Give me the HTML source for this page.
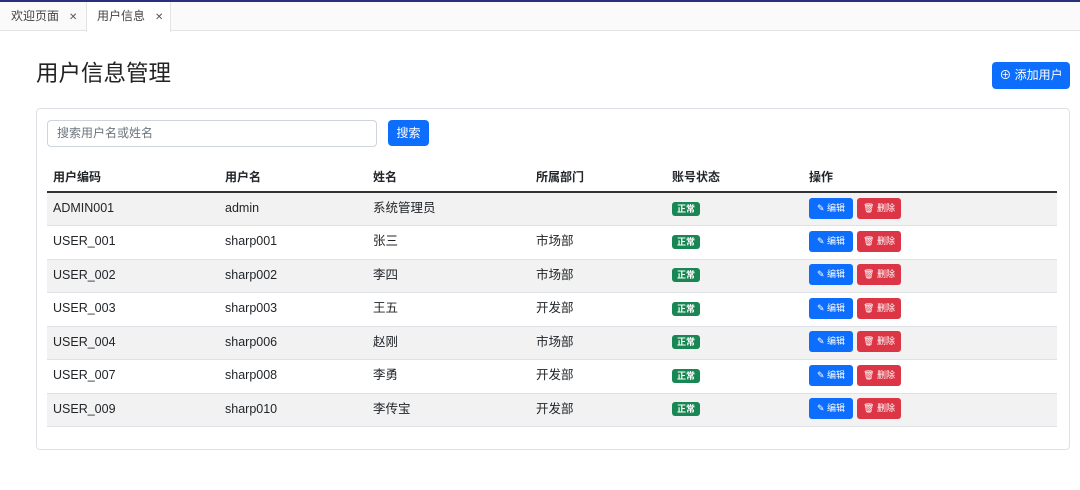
<!DOCTYPE html>
<html><head><meta charset="utf-8"><style>
*{box-sizing:border-box;margin:0;padding:0}
body{width:1080px;height:490px;background:#fff;font-family:"Liberation Sans","Noto Sans CJK SC",sans-serif;font-size:13px;color:#212529;position:relative;overflow:hidden}
.topline{position:absolute;left:0;top:0;width:1080px;height:2px;background:#2b2f7a}
.tabs{position:absolute;left:0;top:2px;width:1080px;height:29px;border-bottom:1px solid #e3e3e3;background:#fafafa}
.tab{position:absolute;top:0;height:29px;line-height:28px;font-size:12px;color:#444}
.tab .x{font-size:10px;margin-left:10px;color:#555}
.tab.act{background:#fff;border-left:1px solid #e3e3e3;border-right:1px solid #e3e3e3;height:30px}
h1{position:absolute;left:36px;top:59px;font-size:22.5px;line-height:30px;font-weight:400;color:#222}
.add{position:absolute;left:992px;top:62px;width:78px;height:27px;background:#0d6efd;border-radius:4px;color:#fff;font-size:12px;line-height:27px;text-align:center}
.card{position:absolute;left:36px;top:108px;width:1034px;height:342px;border:1px solid #dee2e6;border-radius:4px}
.inp{position:absolute;left:47px;top:120px;width:330px;height:27px;border:1px solid #ced4da;border-radius:4px;font-size:12px;color:#6c757d;line-height:25px;padding-left:9px}
.sb{position:absolute;left:388px;top:120px;width:41px;height:26px;background:#0d6efd;border-radius:4px;color:#fff;font-size:12px;line-height:26px;text-align:center}
table{position:absolute;left:47px;top:163px;width:1010px;border-collapse:collapse}
th{font-weight:700;text-align:left;height:29px;padding-left:6px;font-size:12px;border-bottom:2px solid #333;line-height:16px}
td{height:33.5px;padding:0 0 2px 6px;border-bottom:1px solid #dee2e6;line-height:16px;vertical-align:middle;font-size:12.5px}
td span{vertical-align:middle}
tr.s td{background:#f2f2f2}
.badge{display:inline-block;background:#198754;color:#fff;font-size:9px;font-weight:700;padding:0 5px;line-height:14px;border-radius:3px}
.b{display:inline-block;width:44px;height:21px;border-radius:3px;color:#fff;font-size:9px;line-height:21px;text-align:center}
.e{background:#0d6efd}.d{background:#dc3545;margin-left:4px}
</style></head><body>
<div class="topline"></div>
<div class="tabs">
<div class="tab" style="left:11px">欢迎页面<span class="x">✕</span></div>
<div class="tab act" style="left:86px;width:85px;padding-left:10px">用户信息<span class="x">✕</span></div>
</div>
<h1>用户信息管理</h1>
<div class="add">⊕ 添加用户</div>
<div class="card"></div>
<div class="inp">搜索用户名或姓名</div>
<div class="sb">搜索</div>
<table>
<tr><th style="width:172px">用户编码</th><th style="width:148px">用户名</th><th style="width:163px">姓名</th><th style="width:136px">所属部门</th><th style="width:137px">账号状态</th><th>操作</th></tr>
<tr class="s"><td>ADMIN001</td><td>admin</td><td>系统管理员</td><td></td><td><span class="badge">正常</span></td><td><span class="b e">✎ 编辑</span><span class="b d">🗑 删除</span></td></tr>
<tr><td>USER_001</td><td>sharp001</td><td>张三</td><td>市场部</td><td><span class="badge">正常</span></td><td><span class="b e">✎ 编辑</span><span class="b d">🗑 删除</span></td></tr>
<tr class="s"><td>USER_002</td><td>sharp002</td><td>李四</td><td>市场部</td><td><span class="badge">正常</span></td><td><span class="b e">✎ 编辑</span><span class="b d">🗑 删除</span></td></tr>
<tr><td>USER_003</td><td>sharp003</td><td>王五</td><td>开发部</td><td><span class="badge">正常</span></td><td><span class="b e">✎ 编辑</span><span class="b d">🗑 删除</span></td></tr>
<tr class="s"><td>USER_004</td><td>sharp006</td><td>赵刚</td><td>市场部</td><td><span class="badge">正常</span></td><td><span class="b e">✎ 编辑</span><span class="b d">🗑 删除</span></td></tr>
<tr><td>USER_007</td><td>sharp008</td><td>李勇</td><td>开发部</td><td><span class="badge">正常</span></td><td><span class="b e">✎ 编辑</span><span class="b d">🗑 删除</span></td></tr>
<tr class="s"><td>USER_009</td><td>sharp010</td><td>李传宝</td><td>开发部</td><td><span class="badge">正常</span></td><td><span class="b e">✎ 编辑</span><span class="b d">🗑 删除</span></td></tr>
</table>
</body></html>
